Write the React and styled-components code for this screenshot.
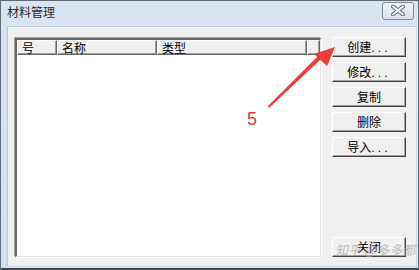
import React from 'react';
import styled, { createGlobalStyle } from 'styled-components';

const Global = createGlobalStyle`
  html, body { margin: 0; padding: 0; background: #fff; }
  body { font-family: "Noto Sans CJK SC", "DejaVu Sans", sans-serif; }
`;

const Window = styled.div`
  position: relative;
  width: 419px;
  height: 270px;
  box-sizing: border-box;
  display: flex;
  flex-direction: column;
  background: linear-gradient(#dbe5f1, #d3dfed);
  border: 1px solid #5f6b79;
  border-bottom: 2px solid #3e4651;
  padding: 0 2px 2px 6px;
`;

const TitleBar = styled.div`
  height: 25px;
  display: flex;
  align-items: center;
  justify-content: space-between;
  flex-shrink: 0;
`;

const Title = styled.span`
  font-size: 12px;
  color: #2a2a2a;
  margin-top: -4px;
`;

const CloseX = styled.div`
  width: 30px;
  height: 16px;
  margin-top: -6px;
  margin-right: 2px;
  border: 1px solid #7d8a99;
  border-radius: 3px;
  background: linear-gradient(#f2f6fb, #d6e0ec);
  display: flex;
  align-items: center;
  justify-content: center;
`;

const Client = styled.div`
  flex: 1;
  display: flex;
  background: #f0f0f0;
  border-top: 1px solid #b9c6d5;
  border-left: 1px solid #b9c6d5;
  padding: 10px 10px 9px 7px;
  gap: 11px;
`;

const ListBox = styled.div`
  margin-top: 1px;
  width: 306px;
  box-sizing: border-box;
  background: #fff;
  border-top: 2px solid #696969;
  border-left: 2px solid #696969;
  border-right: 1px solid #e3e3e3;
  border-bottom: 1px solid #e3e3e3;
  box-shadow: -1px -1px 0 #a0a0a0, 1px 1px 0 #fff;
`;

const Header = styled.div`
  display: flex;
  height: 15px;
`;

const HeadCell = styled.div`
  width: ${p => p.w}px;
  flex: ${p => (p.w ? 'none' : 1)};
  box-sizing: border-box;
  background: #f0f0f0;
  border-top: 1px solid #fff;
  border-left: 1px solid #fff;
  border-right: 1px solid #696969;
  border-bottom: 1px solid #696969;
  box-shadow: inset -1px -1px 0 #a0a0a0;
  font-size: 12px;
  line-height: 13px;
  color: #000;
  padding-left: 4px;
  white-space: nowrap;
`;

const Buttons = styled.div`
  width: 74px;
  display: flex;
  flex-direction: column;
  gap: 5px;
`;

const Button = styled.div`
  height: 20px;
  box-sizing: border-box;
  background: #f0f0f0;
  border-top: 1px solid #fff;
  border-left: 1px solid #fff;
  border-right: 1px solid #404040;
  border-bottom: 1px solid #404040;
  box-shadow: inset -1px -1px 0 #a0a0a0;
  font-size: 12px;
  line-height: 17px;
  text-align: center;
  color: #000;
  margin-top: ${p => (p.push ? 'auto' : 0)};
`;

const Dots = styled.span`
  letter-spacing: 3px;
  font-family: "DejaVu Sans", sans-serif;
  font-size: 11px;
`;

const Overlay = styled.svg`
  position: absolute;
  left: 0;
  top: 0;
  pointer-events: none;
`;

const Label = styled.span`
  position: absolute;
  left: 246px;
  top: 108px;
  font-family: "Liberation Sans", sans-serif;
  font-size: 18px;
  color: #e53a3a;
`;

const Watermark = styled.span`
  position: absolute;
  left: 334px;
  top: 239px;
  font-size: 13px;
  font-style: italic;
  color: rgba(170, 170, 170, 0.75);
  white-space: nowrap;
`;

const items = [
  ['创建', true],
  ['修改', true],
  ['复制', false],
  ['删除', false],
  ['导入', true],
];

export default function App() {
  return (
    <>
      <Global />
      <Window>
        <TitleBar>
          <Title>材料管理</Title>
          <CloseX>
            <svg width="14" height="11" viewBox="0 0 14 11">
              <path d="M2 1.5 L12 9.5 M12 1.5 L2 9.5" stroke="#5b6b7e" strokeWidth="4" strokeLinecap="round" />
              <path d="M2 1.5 L12 9.5 M12 1.5 L2 9.5" stroke="#fff" strokeWidth="2" strokeLinecap="round" />
            </svg>
          </CloseX>
        </TitleBar>
        <Client>
          <ListBox>
            <Header>
              <HeadCell w={40}>号</HeadCell>
              <HeadCell w={100}>名称</HeadCell>
              <HeadCell w={150}>类型</HeadCell>
              <HeadCell />
            </Header>
          </ListBox>
          <Buttons>
            {items.map(([t, d]) => (
              <Button key={t}>
                {t}
                {d && <Dots>...</Dots>}
              </Button>
            ))}
            <Button push>关闭</Button>
          </Buttons>
        </Client>
        <Overlay width="419" height="270">
          <polygon points="268,107 320,58 317,55 267,105" fill="#f03a3a" />
          <polygon points="334,46 313,53 326,65" fill="#f03a3a" />
        </Overlay>
        <Label>5</Label>
        <Watermark>知乎 @多多都</Watermark>
      </Window>
    </>
  );
}
